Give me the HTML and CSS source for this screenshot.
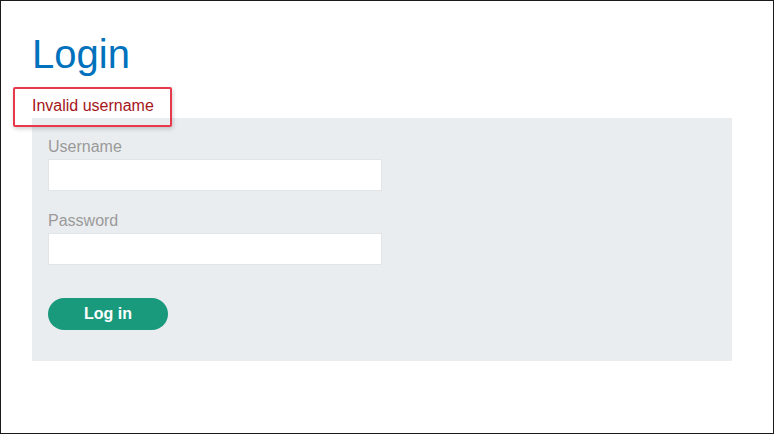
FILE: index.html
```html
<!DOCTYPE html>
<html lang="en">
<head>
<meta charset="utf-8">
<title>Login</title>
<link rel="stylesheet" href="styles.css">
</head>
<body>
<div class="frame">
  <div class="content">
    <h1 class="title">Login</h1>
    <p class="warning">Invalid username</p>
    <form class="login-form">
      <label class="field-label" for="username">Username</label>
      <input class="field-input" id="username" type="text">
      <label class="field-label" for="password">Password</label>
      <input class="field-input" id="password" type="password">
      <button class="btn-login" type="button">Log in</button>
    </form>
  </div>
  <div class="highlight"></div>
</div>
</body>
</html>
```

FILE: styles.css
```css
* { box-sizing: border-box; }
html, body { margin: 0; padding: 0; background: #fff; }
body { font-family: "Liberation Sans", Arial, sans-serif; }

.frame {
  position: relative;
  width: 774px;
  height: 434px;
  border: 1px solid #1a1a1a;
  overflow: hidden;
}

.content {
  padding: 30px 0 0 31px;
}

.title {
  margin: 0;
  font-size: 40px;
  line-height: 46px;
  font-weight: normal;
  color: #0071bc;
}

.warning {
  margin: 20px 0 3px 0;
  font-size: 16px;
  line-height: 18px;
  color: #a4161a;
}

.login-form {
  width: 700px;
  background: #eaedef;
  padding: 20px 16px 31px 16px;
  display: flex;
  flex-direction: column;
  align-items: flex-start;
}

.field-label {
  font-size: 16px;
  line-height: 18px;
  color: #9a9a9a;
  margin-bottom: 3px;
}

.field-input {
  width: 334px;
  height: 32px;
  border: 1px solid #e2e4e6;
  background: #fff;
  margin: 0 0 21px 0;
  padding: 0 8px;
  font: inherit;
}

.field-input:last-of-type { margin-bottom: 33px; }

.btn-login {
  width: 120px;
  height: 32px;
  border: none;
  border-radius: 16px;
  background: #1a9a7d;
  color: #fff;
  font-family: "Liberation Sans", Arial, sans-serif;
  font-size: 16px;
  font-weight: bold;
  padding: 0;
}

.highlight {
  position: absolute;
  left: 12px;
  top: 86px;
  width: 159px;
  height: 40px;
  border: 2px solid #e8384c;
  border-radius: 2px;
  box-shadow: 1px 2px 4px rgba(0,0,0,0.18);
}
```
